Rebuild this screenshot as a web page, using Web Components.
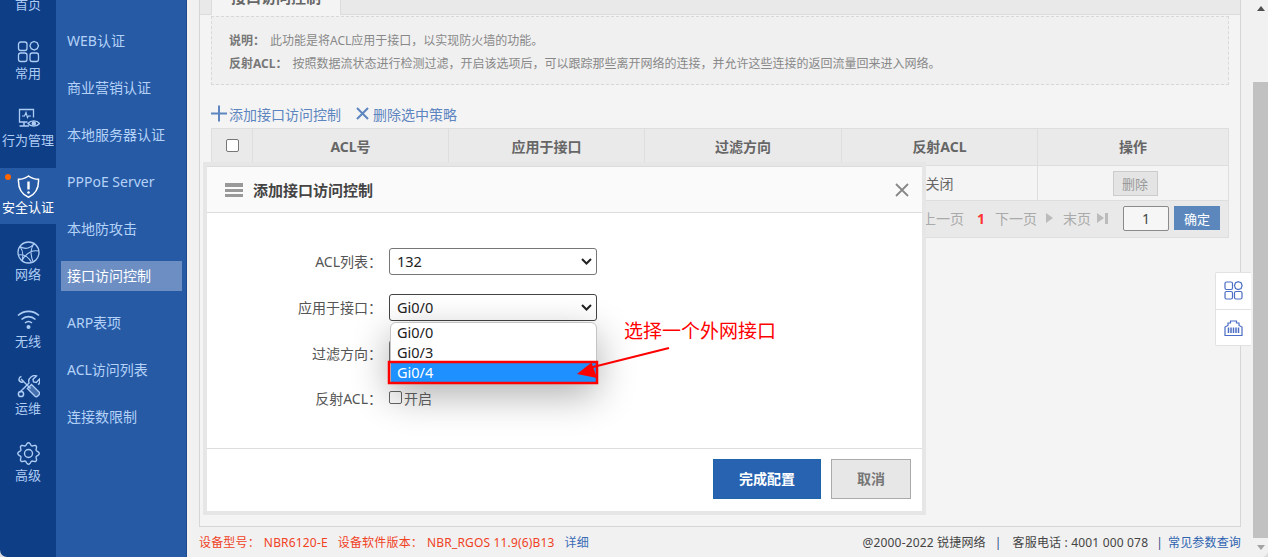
<!DOCTYPE html>
<html lang="zh-CN"><head><meta charset="utf-8"><title>接口访问控制</title>
<style>
html,body{margin:0;height:100%;background:#dcdcdc;overflow:hidden}
body{font:14px "Noto Sans","Noto Sans CJK SC",sans-serif;color:#555}
</style></head><body>
<app-shell>
  <rail-nav slot="rail">
    <rail-item label="首页" style="margin:-35px 0 2px"></rail-item>
    <rail-item label="常用" icon="apps"></rail-item>
    <rail-item label="行为管理" icon="monitor"></rail-item>
    <rail-item label="安全认证" icon="shield" active></rail-item>
    <rail-item label="网络" icon="globe"></rail-item>
    <rail-item label="无线" icon="wifi"></rail-item>
    <rail-item label="运维" icon="tools"></rail-item>
    <rail-item label="高级" icon="gear"></rail-item>
  </rail-nav>
  <sub-nav slot="sub">
    <sub-item>WEB认证</sub-item>
    <sub-item>商业营销认证</sub-item>
    <sub-item>本地服务器认证</sub-item>
    <sub-item>PPPoE Server</sub-item>
    <sub-item>本地防攻击</sub-item>
    <sub-item active>接口访问控制</sub-item>
    <sub-item>ARP表项</sub-item>
    <sub-item>ACL访问列表</sub-item>
    <sub-item>连接数限制</sub-item>
  </sub-nav>
  <content-panel slot="main"></content-panel>
  <app-footer slot="main"></app-footer>
  <page-scrollbar slot="scroll"></page-scrollbar>
  <float-tools slot="overlay"></float-tools>
  <acl-dialog slot="overlay"></acl-dialog>
  <callout-arrow slot="overlay"></callout-arrow>
</app-shell>
<script>
function gearPath(){
  let d='';
  for(let i=0;i<=96;i++){
    const t=i/96*Math.PI*2,r=9.5+1.25*Math.cos(8*t);
    d+=(i?'L':'M')+(11.5+r*Math.cos(t)).toFixed(2)+' '+(11.5+r*Math.sin(t)).toFixed(2);
  }
  return d+'z';
}
const ICONS={
apps:'<rect x="1.500" y="2" width="8.500" height="8.500" rx="2.200"/><rect x="1.500" y="13" width="8.500" height="8.500" rx="2.200"/><rect x="13" y="13" width="8.500" height="8.500" rx="2.200"/><path d="M17.200 1.500l3 1.200 1.300 3-1.300 3-3 1.300-3-1.300-1.300-3 1.300-3z"/>',
monitor:'<path d="M16.500 10.500V2.500H2.500v12.500h8"/><path d="M5 9h2.500l1.500-3.500 1.500 5 1-1.500h2.500" stroke-width="1.200"/><path d="M2.500 19h9.500M7 15v4" stroke-width="1.500"/><path d="M11 16.500c2.800-3.500 8.700-3.500 11.500 0-2.800 3.500-8.700 3.500-11.500 0z"/><circle cx="16.800" cy="16.500" r="1.600" fill="currentColor"/>',
shield:'<path d="M11.500 1c2.800 2.200 6 3.300 10 3.300.5 8.700-2.500 14.500-10 18-7.500-3.500-10.500-9.300-10-18 4 0 7.200-1.100 10-3.300z" stroke-width="1.500"/><path d="M11.500 6.500v8" stroke-width="2.400"/><circle cx="11.500" cy="17.500" r="1.300" fill="currentColor" stroke="none"/>',
globe:'<circle cx="11.500" cy="11.500" r="10.500"/><path d="M3 5.500c5 3 10 2.500 14.500-3.500M17.500 2c-4 5-4.500 11-1.500 18.500M21.800 10c-5.500-1-12 1-16.800 9.500M3 5.500c3 4 3.500 9 2 14M1.500 14c5-1 9 .5 13 7.300" stroke-width="1.100"/>',
wifi:'<path d="M1 7.500C7 2 16 2 22 7.500M4.500 11.500c4-3.800 10-3.800 14 0M8 15c2-1.700 5-1.700 7 0" stroke-width="1.600"/><circle cx="11.500" cy="19" r="2" fill="currentColor" stroke="none"/>',
tools:'<path d="M4.500 1.500c-1.200.2-2.300 1.300-2.500 2.500s.8 2.500 2 3 2.200-.2 2.500-.5l7 7" stroke-width="1.400"/><path d="M4 4l2.500 2.500" stroke-width="1.400"/><path d="M12.500 11.500l2-2 7.500 7.500c.8.8.8 2-.2 3l-1 1c-1 1-2.200.8-3 0l-7.500-7.500z" fill="currentColor" fill-opacity=".35"/><path d="M3 17l9-9c-.8-2.500 0-4.500 2-6s4-1.700 5.500-1l-3.500 3.200.5 2.800 2.800.5 3.200-3.500c.7 2.200.2 4.300-1.300 5.800" stroke-width="1.400"/><circle cx="4" cy="19" r="2.600" stroke-width="1.500"/>',
gear:'<path d="'+gearPath()+'" stroke-width="1.400"/><circle cx="11.500" cy="11.500" r="4" stroke-width="1.400"/>'
};
function def(name,html,init){
  const tpl=document.createElement('template');tpl.innerHTML=html;
  customElements.define(name,class extends HTMLElement{
    constructor(){super();this.attachShadow({mode:'open'}).appendChild(tpl.content.cloneNode(true));}
    connectedCallback(){if(init)init(this,this.shadowRoot);}
  });
}
def('app-shell',`<style>
:host{display:flex;position:relative;width:1268px;height:557px;overflow:hidden;background:#f1f1f1;border-radius:0 0 7px 7px}
.main{flex:1;min-width:0;display:flex;flex-direction:column}
</style><slot name="rail"></slot><slot name="sub"></slot><div class="main"><slot name="main"></slot></div><slot name="scroll"></slot><slot name="overlay"></slot>`);
def('rail-nav',`<style>:host{display:flex;flex-direction:column;gap:11px;width:56px;flex:none;background:#0e3e86;overflow:hidden}</style><slot></slot>`);
def('rail-item',`<style>
:host{display:flex;flex-direction:column;align-items:center;position:relative;height:56px;flex:none;color:#aecdf5;font-size:13px;white-space:nowrap}
:host([active]){background:#265aa5;color:#fff}
svg{width:23px;height:23px;margin-top:6px;fill:none;stroke:currentColor;stroke-width:1.300}
.l{line-height:18px;margin-top:1px}
:host([active]) svg{margin-top:7px}
:host([active]) .l{margin-top:0}
:host([active]) .dot{position:absolute;left:5px;top:6px;width:6px;height:6px;border-radius:50%;background:#f60}
</style><span class="dot"></span><svg viewBox="0 0 23 23"></svg><span class="l"></span>`,(h,s)=>{
  s.querySelector('.l').textContent=h.getAttribute('label');
  const ic=h.getAttribute('icon');const v=s.querySelector('svg');
  if(ic)v.innerHTML=ICONS[ic];
});
def('sub-nav',`<style>:host{display:flex;flex-direction:column;gap:17px;width:130px;flex:none;padding:26px 0 0 0;box-sizing:content-box;background:#265aa5;border-right:1px solid #1d4a8c}</style><slot></slot>`);
def('sub-item',`<style>
:host{display:flex;align-items:center;height:30px;margin-left:5px;width:121px;padding:0 0 2px 6px;box-sizing:border-box;color:#b4d2f8;font-size:14px;white-space:nowrap}
:host([active]){background:#6c8ec3;color:#fff}
</style><slot></slot>`);
def('content-panel',`<style>
:host{display:block;flex:1;min-height:0;margin:0 10px 0 12px;background:#f4f4f4;border:solid #d6d6d6;border-width:0 1px 1px;overflow:hidden}
.tabs{display:flex;margin-top:-27px;height:42px;background:#e9e9e9;border-bottom:1px solid #dcdcdc;padding-left:11px;box-sizing:border-box}
.tab{width:130px;background:#f4f4f4;border:solid #dcdcdc;border-width:0 1px;height:42px;box-sizing:border-box;font:bold 15px/48px "Noto Sans","Noto Sans CJK SC",sans-serif;text-align:center;color:#666}
.wrap{padding:1px 11px 0}
.note{height:69px;box-sizing:border-box;border:1px dashed #d8d8d8;background:#f0f0f0;padding:12px 17px 0;font-size:12px;line-height:23px;color:#888;white-space:nowrap}
.note b{color:#777;margin-right:5px}
.tools{display:flex;align-items:center;height:43px;box-sizing:border-box;padding-top:14px;color:#5d85bf;font-size:14px;gap:14px;white-space:nowrap}
.tools span{display:flex;align-items:center;gap:1px}
.tools span+span{gap:3px}
svg{fill:none;stroke:#5d85bf;stroke-width:2}
</style>
<div class="tabs"><div class="tab">接口访问控制</div></div>
<div class="wrap">
<div class="note"><div><b>说明&#xFF1A;</b>此功能是将ACL应用于接口&#xFF0C;以实现防火墙的功能。</div><div><b>反射ACL&#xFF1A;</b>按照数据流状态进行检测过滤&#xFF0C;开启该选项后&#xFF0C;可以跟踪那些离开网络的连接&#xFF0C;并允许这些连接的返回流量回来进入网络。</div></div>
<div class="tools"><span><svg width="17" height="17" viewBox="0 0 17 17"><path d="M0 8.500h16M8 .5v16"/></svg>添加接口访问控制</span><span><svg width="15" height="15" viewBox="0 0 15 15"><path d="M2 2l11 11M13 2L2 13"/></svg>删除选中策略</span></div>
<acl-table></acl-table>
</div>`);
def('acl-table',`<style>
:host{display:block;border:1px solid #dedede;color:#666}
.g{display:grid;grid-template-columns:41px 196px 196px 197px 196px 1fr}
.g>div{display:flex;align-items:center;justify-content:center;border-right:1px solid #dedede;box-sizing:border-box;border-bottom:1px solid #dedede}
.g>div:nth-child(6n){border-right:0}
.h>div{height:37px;padding-bottom:2px;background:#eaeaea;font-weight:700;font-size:14px;color:#666}
.r>div{height:35px;font-size:14px;color:#666}
.cb{width:11px;height:11px;border:1px solid #767676;border-radius:2px;background:#fff;margin-top:-1px}
.del{width:45px;height:25px;border:1px solid #ccc;background:#e4e4e4;color:#999;font-size:13px;display:flex;align-items:center;justify-content:center;box-sizing:border-box;margin-left:4px}
.p{display:flex;align-items:center;justify-content:flex-end;height:36px;box-sizing:border-box;padding:0 8px 2px 0;background:#e9e9e9;color:#aaa;font-size:14px;white-space:nowrap}
.p .n{color:#f33;font-weight:700;margin:0 10px 0 13px}
.tri{width:0;height:0;border:5px solid transparent;border-left:7px solid #bbb;border-right:0;margin:0 10px 0 9px}
.bar{width:3px;height:11px;background:#bbb;margin-left:1px}
.inp{width:46px;height:25px;border:1px solid #8a8a8a;border-radius:2px;background:#f6f6f6;color:#444;display:flex;align-items:center;justify-content:center;box-sizing:border-box;margin:0 5px 0 15px;font-size:14px}
.ok{width:46px;height:24px;background:#5b87bd;color:#fff;font-size:13px;display:flex;align-items:center;justify-content:center}
</style>
<div class="g h"><div><span class="cb"></span></div><div>ACL号</div><div>应用于接口</div><div>过滤方向</div><div>反射ACL</div><div>操作</div></div>
<div class="g r"><div></div><div></div><div></div><div></div><div>关闭</div><div><span class="del">删除</span></div></div>
<div class="p"><span>上一页</span><span class="n">1</span><span>下一页</span><span class="tri"></span><span>末页</span><span class="tri" style="margin-right:0;margin-left:6px"></span><span class="bar"></span><span class="inp">1</span><span class="ok">确定</span></div>`);
def('app-footer',`<style>
:host{display:flex;align-items:center;justify-content:space-between;flex:none;height:30px;margin:0 10px 0 12px;font-size:12px;letter-spacing:.17px;white-space:nowrap;color:#444}
.l{color:#f0421f}.l span{margin-right:10px}.l .lab{margin-right:4px}.l a{color:#3a6cb5}
.r a{color:#2e63b0}.s{color:#304a8c}
</style><div class="l"><span class="lab">设备型号&#xFF1A;</span><span>NBR6120-E</span><span class="lab">设备软件版本&#xFF1A;</span><span>NBR_RGOS 11.9(6)B13</span><a>详细</a></div>
<div class="r">@2000-2022 锐捷网络<span class="s" style="margin:0 11px 0 9px">|</span>客服电话 : 4001 000 078<span class="s" style="margin:0 5px 0 8px">|</span><a>常见参数查询</a></div>`);
def('page-scrollbar',`<style>
:host{display:flex;flex-direction:column;align-items:flex-end;width:17px;flex:none;background:#f1f1f1;position:relative}
.up,.dn{width:15px;display:flex;align-items:center;justify-content:center;flex:none}
.up{height:17px}.dn{height:19px}
.up i{border:4px solid transparent;border-bottom:5px solid #505050;border-top:0}
.dn i{border:4px solid transparent;border-top:5px solid #a3a3a3;border-bottom:0}
.gap{height:65px;flex:none}.th{flex:1;width:15px;background:#c1c1c1}
</style><div class="up"><i></i></div><div class="gap"></div><div class="th"></div><div class="dn"><i></i></div>`);
def('float-tools',`<style>
:host{position:absolute;left:1215px;top:272px;width:36px;height:74px;background:#fff;border:1px solid #e2e2e2;border-right:0;box-sizing:border-box;display:flex;flex-direction:column;border-radius:2px 0 0 2px}
div{flex:1;display:flex;align-items:center;justify-content:center}div+div{border-top:1px solid #e2e2e2}
svg{width:19px;height:19px;fill:none;stroke:#4a6cc4;stroke-width:1.200}
</style><div><svg viewBox="0 0 19 19"><rect x="1" y="1" width="7.500" height="7.500" rx="1.500"/><rect x="1" y="10.500" width="7.500" height="7.500" rx="1.500"/><rect x="10.500" y="10.500" width="7.500" height="7.500" rx="1.500"/><path d="M14.300.7l2.800 1 1 2.900-1 2.900-2.800 1-2.800-1-1-2.900 1-2.900z"/></svg></div>
<div><svg viewBox="0 0 19 19"><path d="M1 17.500V9l3-1.500V5h2.500V3h6v2H15v2.500L18 9v8.500z"/><path d="M4.500 9.500v5.500M7 9.500v5.500M9.500 9.500v5.500M12 9.500v5.500M14.500 9.500v5.500" stroke-width="1.500"/></svg></div>`);
def('fake-select',`<style>
:host{display:flex;align-items:center;position:relative;width:208px;height:27px;box-sizing:border-box;border:1px solid #767676;border-radius:3px;background:#fff;padding:0 0 2px 7px;color:#222;font-size:14.500px}
:host([open]){border-color:#444}
svg{position:absolute;right:4px;top:9px;width:11px;height:7px;fill:none;stroke:#222;stroke-width:2}
</style><slot></slot><svg viewBox="0 0 11 7"><path d="M1 1l4.500 4.500L10 1"/></svg>`);
def('acl-dialog',`<style>
:host{position:absolute;z-index:1;left:203px;top:162px;width:723px;height:353px;box-sizing:border-box;border:4px solid #e6e6e6;display:block;background:#fff}
.box{display:flex;flex-direction:column;height:100%;border-top:1px solid #dcdcdc;box-sizing:border-box}
.head{display:flex;align-items:center;height:45px;flex:none;background:#fafafa;border-bottom:1px solid #ddd;padding:0 11px 0 18px;font-weight:700;font-size:15px;color:#444}
.menu{width:18px;height:14px;margin-right:10px;background:linear-gradient(#999 0 3.500px,transparent 3.500px 5.500px,#999 5.500px 9px,transparent 9px 11px,#999 11px)}
.x{margin-left:auto;margin-right:2px;width:14px;height:14px}
.x svg{display:block;stroke:#888;stroke-width:1.800;fill:none}
.body{flex:1;position:relative;padding-top:35px;box-sizing:border-box}
.row{display:flex;align-items:center;height:27px;margin-bottom:19px;color:#555;font-size:14px}
.row label{width:175px;text-align:right;margin:-2px 7px 0 0;flex:none}
.chk{display:flex;align-items:center;color:#666;font-size:14px;margin-top:-2px}
.chk i{width:11px;height:11px;border:1px solid #666;border-radius:2px;margin-right:2px}
.anchor{position:absolute;left:183px;top:109px;width:207px;height:0}
.dd{width:207px;height:61px;box-sizing:border-box;background:#fff;border:1px solid #c4c4c4;border-radius:6px 6px 0 0;box-shadow:0 12px 38px rgba(0,0,0,.32);color:#222;font-size:14.500px;line-height:18px}
.dd div{padding-left:6px;height:20px}
.dd .on{background:#1e90ff;color:#fff}
.foot{flex:none;height:63px;border-top:1px solid #ddd;box-sizing:border-box;display:flex;justify-content:flex-end;gap:10px;padding:10px 11px 0 0}
.btn{display:flex;align-items:center;justify-content:center;height:40px;box-sizing:border-box;padding-bottom:2px;font-weight:700;font-size:14px}
.pri{width:108px;background:#2763b1;border:1px solid #1f63a8;color:#fff}
.sec{width:80px;background:#e7e7e7;border:1px solid #aaa;color:#777}
</style><div class="box">
<div class="head"><span class="menu"></span>添加接口访问控制<span class="x"><svg width="14" height="14" viewBox="0 0 14 14"><path d="M1 1l12 12M13 1L1 13"/></svg></span></div>
<div class="body">
<div class="row"><label>ACL列表&#xFF1A;</label><fake-select>132</fake-select></div>
<div class="row"><label>应用于接口&#xFF1A;</label><fake-select open>Gi0/0</fake-select></div>
<div class="row"><label>过滤方向&#xFF1A;</label><fake-select></fake-select></div>
<div class="row" style="height:25px;margin:0"><label>反射ACL&#xFF1A;</label><span class="chk"><i></i>开启</span></div>
<div class="anchor"><div class="dd"><div>Gi0/0</div><div>Gi0/3</div><div class="on">Gi0/4</div></div></div>
</div>
<div class="foot"><span class="btn pri">完成配置</span><span class="btn sec">取消</span></div>
</div>`);
def('callout-arrow',`<style>
:host{position:absolute;z-index:2;left:380px;top:315px;width:420px;height:80px;display:block;pointer-events:none}
svg{position:absolute;left:0;top:0;width:420px;height:80px}
.t{position:absolute;left:244px;top:2px;color:#f00;font-size:19px;line-height:28px;white-space:nowrap}
</style><svg viewBox="0 0 420 80"><rect x="9" y="47" width="208" height="21" fill="none" stroke="#f00" stroke-width="2.500"/><path d="M289 33L205 54" stroke="#f00" stroke-width="2.200"/><path d="M197 59L211.500 47.500 217 63z" fill="#f00"/></svg><span class="t">选择一个外网接口</span>`);
</script>
</body></html>
